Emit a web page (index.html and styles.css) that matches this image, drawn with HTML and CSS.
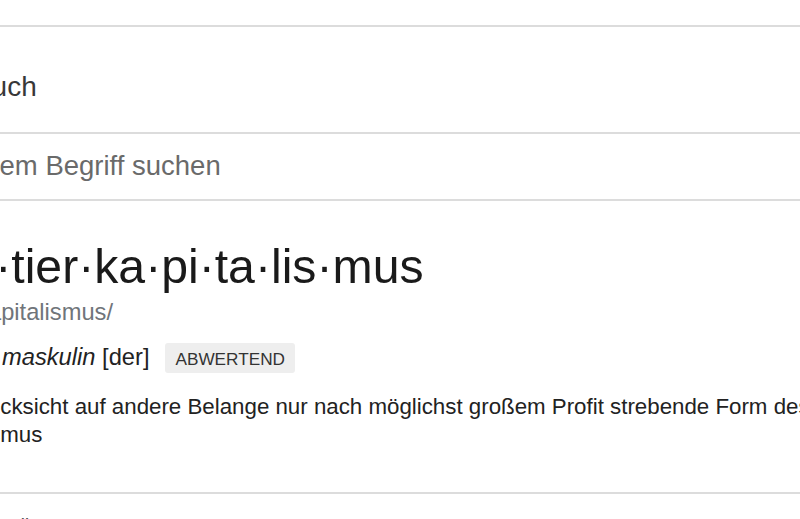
FILE: index.html
```html
<!DOCTYPE html>
<html lang="de">
<head>
<meta charset="utf-8">
<title>Wörterbuch</title>
<link rel="stylesheet" href="styles.css">
</head>
<body>
<div class="card">
  <div class="card-head"><span class="title">Wörterbuch</span></div>
  <div class="search"><span class="placeholder">Nach einem Begriff suchen</span></div>
  <div class="entry">
    <div class="hw">Raub·tier·ka·pi·ta·lis·mus</div>
    <div class="phon">/Raubtierkapitalismus/</div>
    <div class="labels">
      <span class="pos"><i>Substantiv, maskulin</i> [der]</span>
      <span class="badge">ABWERTEND</span>
    </div>
    <ol class="defs">
      <li>ohne Rücksicht auf andere Belange nur nach möglichst großem Profit strebende Form des Kapitalismus</li>
    </ol>
  </div>
  <div class="more">Übersetzungen, Wortherkunft und mehr</div>
</div>
</body>
</html>
```
FILE: styles.css
```css
html, body {
  margin: 0;
  padding: 0;
  background: #ffffff;
}
body {
  width: 800px;
  height: 519px;
  overflow: hidden;
  font-family: "Liberation Sans", Arial, sans-serif;
  color: #222222;
}
.card {
  margin-top: 25px;
  margin-left: -120px;
  width: 1200px;
  border-top: 2px solid #dcdcdc;
}
.card-head {
  box-sizing: border-box;
  height: 107px;
  padding: 44px 0 0 12px;
  border-bottom: 2px solid #dcdcdc;
}
.title {
  font-size: 28px;
  line-height: 32px;
  color: #383838;
}
.search {
  box-sizing: border-box;
  height: 67px;
  padding: 16px 0 0 11px;
  border-bottom: 2px solid #dcdcdc;
}
.placeholder {
  font-size: 27.5px;
  line-height: 32px;
  color: #6a6a6a;
}
.entry {
  box-sizing: border-box;
  height: 293px;
  padding-top: 37px;
  border-bottom: 2px solid #dcdcdc;
}
.hw {
  font-size: 48.2px;
  line-height: 56px;
  color: #1a1a1a;
  white-space: nowrap;
}
.phon {
  margin-top: 4px;
  font-size: 23.7px;
  line-height: 28px;
  color: #70757a;
}
.labels {
  margin-top: 17px;
  display: flex;
  align-items: baseline;
  gap: 16px;
}
.pos {
  font-size: 23.7px;
  line-height: 28px;
  color: #222222;
}
.badge {
  font-size: 17.2px;
  line-height: 20px;
  padding: 6px 10px 4px;
  background: #eeeeee;
  border-radius: 3px;
  color: #333333;
}
.defs {
  margin: 20px 0 0;
  padding: 0 0 0 36px;
  list-style: none;
  max-width: 960px;
}
.defs li {
  font-size: 22.3px;
  line-height: 27.5px;
  color: #222222;
}
.more {
  padding: 22px 0 0 137px;
  font-size: 22px;
  line-height: 28px;
  color: #555555;
}
```
